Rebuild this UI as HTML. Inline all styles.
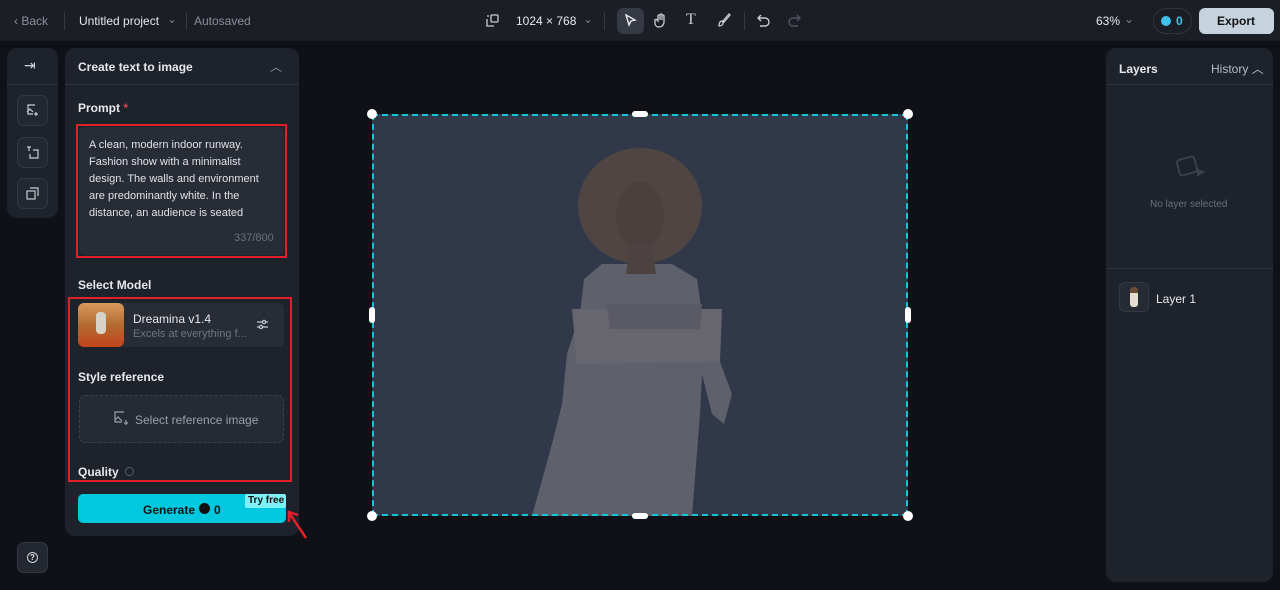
<!DOCTYPE html>
<html><head><meta charset="utf-8"><style>
*{box-sizing:border-box;margin:0;padding:0}
body{width:1280px;height:590px;background:#0f1116;font-family:"Liberation Sans",sans-serif;color:#e6e8ec;position:relative;overflow:hidden;font-size:12px}
.abs{position:absolute}
.top{left:0;top:0;width:1280px;height:41px;background:#1b1e25}
.panel{background:#1e222b;border-radius:10px}
.t{position:absolute;white-space:nowrap}
.b{font-weight:bold}
</style></head><body>
<div class="abs top"></div>
<div class="t" style="left:14px;top:14px;color:#8a909b;font-size:12px">‹ Back</div>
<div class="abs" style="left:64px;top:12px;width:1px;height:18px;background:#333843"></div>
<div class="t" style="left:79px;top:14px;font-size:12px;color:#e6e8ec">Untitled project</div>
<div class="t" style="left:167px;top:12px;color:#7b818c">⌄</div>
<div class="abs" style="left:186px;top:12px;width:1px;height:18px;background:#333843"></div>
<div class="t" style="left:194px;top:14px;color:#8a909b">Autosaved</div>
<svg class="abs" style="left:486px;top:14px" width="13" height="13" viewBox="0 0 13 13" fill="none" stroke="#c8ccd3" stroke-width="1.3"><rect x="5" y="1" width="7" height="7" rx="1"/><path d="M1 5v7h7M1 2h2"/></svg>
<div class="t" style="left:516px;top:14px">1024 × 768</div>
<div class="t" style="left:583px;top:12px;color:#7b818c">⌄</div>
<div class="abs" style="left:604px;top:12px;width:1px;height:18px;background:#333843"></div>
<div class="abs" style="left:617px;top:8px;width:27px;height:26px;background:#353a45;border-radius:6px"></div>
<svg class="abs" style="left:624px;top:14px" width="13" height="14" viewBox="0 0 13 14" fill="none" stroke="#e6e8ec" stroke-width="1.4"><path d="M2 1l9 5-4 1-2 4z"/></svg>
<svg class="abs" style="left:654px;top:13px" width="14" height="15" viewBox="0 0 14 15" fill="none" stroke="#c8ccd3" stroke-width="1.3"><path d="M4 8V3a1 1 0 012 0v4V2a1 1 0 012 0v5V3a1 1 0 012 0v6a5 5 0 01-5 5 4 4 0 01-4-3L1 8a1 1 0 012-1z"/></svg>
<div class="t" style="left:686px;top:11px;font-size:16px;color:#c8ccd3;font-family:'Liberation Serif',serif">T</div>
<svg class="abs" style="left:717px;top:13px" width="14" height="14" viewBox="0 0 14 14" fill="none" stroke="#c8ccd3" stroke-width="1.3"><path d="M12 1L6 8l1 1 6-7zM5 8c-2 0-3 2-3 5 2 0 4-1 4-3z"/></svg>
<div class="abs" style="left:744px;top:12px;width:1px;height:18px;background:#333843"></div>
<svg class="abs" style="left:757px;top:14px" width="14" height="13" viewBox="0 0 14 13" fill="none" stroke="#c8ccd3" stroke-width="1.4"><path d="M4 1L1 4l3 3M1 4h7a4 4 0 010 8H3"/></svg>
<svg class="abs" style="left:787px;top:14px" width="14" height="13" viewBox="0 0 14 13" fill="none" stroke="#4f5560" stroke-width="1.4"><path d="M10 1l3 3-3 3M13 4H6a4 4 0 000 8h5"/></svg>
<div class="t" style="left:1096px;top:14px">63%</div>
<div class="t" style="left:1124px;top:12px;color:#7b818c">⌄</div>
<div class="abs" style="left:1153px;top:8px;width:39px;height:26px;border:1px solid #2f343e;border-radius:13px"></div>
<div class="abs" style="left:1161px;top:16px;width:10px;height:10px;border-radius:50%;background:#3ec2ec"></div>
<div class="t b" style="left:1176px;top:14px;color:#3ec2ec">0</div>
<div class="abs" style="left:1199px;top:8px;width:75px;height:26px;background:#c6d3df;border-radius:6px"></div>
<div class="t b" style="left:1217px;top:14px;color:#111;font-size:12px">Export</div>

<!-- left toolbar -->
<div class="abs panel" style="left:7px;top:48px;width:51px;height:170px"></div>
<div class="abs" style="left:7px;top:84px;width:51px;height:1px;background:#2d323c"></div>
<div class="t" style="left:24px;top:57px;font-size:14px;color:#d0d4da">⇥</div>
<div class="abs" style="left:17px;top:95px;width:31px;height:31px;border:1px solid #333843;border-radius:7px;background:#23272f"></div>
<div class="abs" style="left:17px;top:137px;width:31px;height:31px;border:1px solid #333843;border-radius:7px;background:#23272f"></div>
<div class="abs" style="left:17px;top:178px;width:31px;height:31px;border:1px solid #333843;border-radius:7px;background:#23272f"></div>
<svg class="abs" style="left:26px;top:104px" width="13" height="13" viewBox="0 0 13 13" fill="none" stroke="#c8ccd3" stroke-width="1.2"><path d="M9 1H2v9h5M1 8l3-3 3 3M10 8v4M8 10h4"/></svg>
<svg class="abs" style="left:26px;top:146px" width="13" height="13" viewBox="0 0 13 13" fill="none" stroke="#c8ccd3" stroke-width="1.2"><path d="M1 1h4M3 1v4M7 4h5v8H4V8"/></svg>
<svg class="abs" style="left:26px;top:187px" width="13" height="13" viewBox="0 0 13 13" fill="none" stroke="#c8ccd3" stroke-width="1.2"><rect x="1" y="4" width="8" height="8"/><path d="M4 1h8v8"/></svg>
<div class="abs" style="left:17px;top:542px;width:31px;height:31px;border:1px solid #333843;border-radius:7px;background:#23272f"></div>
<div class="abs" style="left:27px;top:552px;width:11px;height:11px;border:1.3px solid #d0d4da;border-radius:50%;font-size:8px;text-align:center;line-height:9px;font-weight:bold">?</div>

<!-- create panel -->
<div class="abs panel" style="left:65px;top:48px;width:234px;height:488px"></div>
<div class="abs" style="left:65px;top:84px;width:234px;height:1px;background:#2d323c"></div>
<div class="t b" style="left:78px;top:60px">Create text to image</div>
<div class="t" style="left:270px;top:58px;color:#8a909b">︿</div>
<div class="t b" style="left:78px;top:101px">Prompt <span style="color:#e0434b">*</span></div>
<div class="abs" style="left:79px;top:127px;width:205px;height:128px;background:#282c35;border-radius:6px"></div>
<div class="abs" style="left:76px;top:124px;width:211px;height:134px;border:2px solid #e0202a"></div>
<div class="abs" style="left:89px;top:137px;width:195px;font-size:11px;line-height:17px;color:#dfe2e7;white-space:nowrap">A clean, modern indoor runway.<br>Fashion show with a minimalist<br>design. The walls and environment<br>are predominantly white. In the<br>distance, an audience is seated</div>
<div class="t" style="left:234px;top:232px;font-size:11px;color:#6a707b">337/800</div>
<div class="t b" style="left:78px;top:278px">Select Model</div>
<div class="abs" style="left:79px;top:303px;width:205px;height:44px;background:#282c35;border-radius:6px"></div>
<div class="abs" style="left:78px;top:303px;width:46px;height:44px;border-radius:6px;background:linear-gradient(#d89a5c,#b46a30 50%,#c1451c)"></div>
<div class="abs" style="left:96px;top:312px;width:10px;height:22px;background:#d8d2c6;border-radius:4px"></div>
<div class="t" style="left:133px;top:312px;color:#e6e8ec">Dreamina v1.4</div>
<div class="t" style="left:133px;top:328px;font-size:11px;color:#6f7580">Excels at everything f...</div>
<svg class="abs" style="left:256px;top:318px" width="13" height="13" viewBox="0 0 13 13" fill="none" stroke="#c8ccd3" stroke-width="1.2"><path d="M1 4h11M1 9h11"/><circle cx="8" cy="4" r="1.6" fill="#282c35"/><circle cx="5" cy="9" r="1.6" fill="#282c35"/></svg>
<div class="t b" style="left:78px;top:370px">Style reference</div>
<div class="abs" style="left:79px;top:395px;width:205px;height:48px;border:1px dashed #3a3f49;border-radius:6px;background:#252a33"></div>
<svg class="abs" style="left:114px;top:411px" width="15" height="15" viewBox="0 0 15 15" fill="none" stroke="#9aa0aa" stroke-width="1.2"><path d="M10 1H1v10h7M1 9l3-3 4 4M12 9v5M10 12h4"/></svg>
<div class="t" style="left:135px;top:413px;color:#9aa0aa">Select reference image</div>
<div class="t b" style="left:78px;top:465px">Quality <span style="display:inline-block;width:9px;height:9px;border:1px solid #555b66;border-radius:50%;margin-left:3px"></span></div>
<div class="abs" style="left:68px;top:297px;width:224px;height:185px;border:2px solid #e0202a"></div>
<div class="abs" style="left:78px;top:494px;width:208px;height:29px;background:#00c8de;border-radius:5px"></div>
<div class="t b" style="left:143px;top:503px;color:#111">Generate</div>
<div class="abs" style="left:199px;top:503px;width:11px;height:11px;border-radius:50%;background:#111"></div>
<div class="t b" style="left:214px;top:503px;color:#111">0</div>
<div class="abs" style="left:245px;top:494px;width:41px;height:14px;background:#7ff0f5;border-radius:2px"></div>
<div class="t b" style="left:248px;top:495px;color:#111;font-size:10px">Try free</div>
<svg class="abs" style="left:286px;top:508px" width="22" height="32" viewBox="0 0 22 32" fill="none" stroke="#e0202a" stroke-width="2.5"><path d="M20 30L4 6M3 14L3 4l9 3"/></svg>

<!-- canvas -->
<div class="abs" style="left:372px;top:114px;width:536px;height:402px;background:#30384a;overflow:hidden">
<svg width="536" height="402" viewBox="0 0 536 402">
<path d="M160 402 L180 330 L190 290 L195 240 L208 200 L212 165 L230 150 L300 150 L325 165 L330 200 L345 240 L360 280 L352 310 L340 300 L330 260 L328 300 L320 402Z" fill="#5e606b"/>
<path d="M200 195 L350 195 L348 248 L205 250Z" fill="#67666e"/>
<path d="M235 190 L330 190 L328 215 L238 215Z" fill="#5a5a64"/>
<ellipse cx="268" cy="92" rx="62" ry="58" fill="#4f4644"/>
<ellipse cx="268" cy="102" rx="24" ry="34" fill="#4a403e"/>
<path d="M258 130 L280 130 L284 160 L254 160Z" fill="#4b4241"/>
</svg></div>
<div class="abs" style="left:372px;top:114px;width:536px;height:402px;border:2px dashed #14c4d8"></div>
<div class="abs" style="left:367px;top:109px;width:10px;height:10px;border-radius:50%;background:#fff"></div>
<div class="abs" style="left:903px;top:109px;width:10px;height:10px;border-radius:50%;background:#fff"></div>
<div class="abs" style="left:367px;top:511px;width:10px;height:10px;border-radius:50%;background:#fff"></div>
<div class="abs" style="left:903px;top:511px;width:10px;height:10px;border-radius:50%;background:#fff"></div>
<div class="abs" style="left:632px;top:111px;width:16px;height:6px;border-radius:3px;background:#fff"></div>
<div class="abs" style="left:632px;top:513px;width:16px;height:6px;border-radius:3px;background:#fff"></div>
<div class="abs" style="left:369px;top:307px;width:6px;height:16px;border-radius:3px;background:#fff"></div>
<div class="abs" style="left:905px;top:307px;width:6px;height:16px;border-radius:3px;background:#fff"></div>

<!-- layers -->
<div class="abs panel" style="left:1106px;top:48px;width:167px;height:534px"></div>
<div class="abs" style="left:1106px;top:84px;width:167px;height:1px;background:#2d323c"></div>
<div class="abs" style="left:1106px;top:268px;width:167px;height:1px;background:#2d323c"></div>
<div class="t b" style="left:1119px;top:62px">Layers</div>
<div class="t" style="left:1211px;top:60px;color:#b8bdc5">History ︿</div>
<svg class="abs" style="left:1174px;top:152px" width="34" height="30" viewBox="0 0 34 30" fill="none" stroke="#3a404b" stroke-width="2"><rect x="4" y="6" width="18" height="16" rx="3" transform="rotate(-15 13 14)"/><path d="M24 18l5 2-5 3z" fill="#3a404b"/></svg>
<div class="t" style="left:1150px;top:199px;font-size:10px;color:#6a707b">No layer selected</div>
<div class="abs" style="left:1119px;top:282px;width:30px;height:30px;border:1px solid #333843;border-radius:6px;background:#262a33"></div>
<div class="abs" style="left:1130px;top:287px;width:8px;height:20px;background:linear-gradient(#6b4a36 30%,#e5ddd2 30%);border-radius:3px"></div>
<div class="t" style="left:1156px;top:292px">Layer 1</div>
</body></html>
